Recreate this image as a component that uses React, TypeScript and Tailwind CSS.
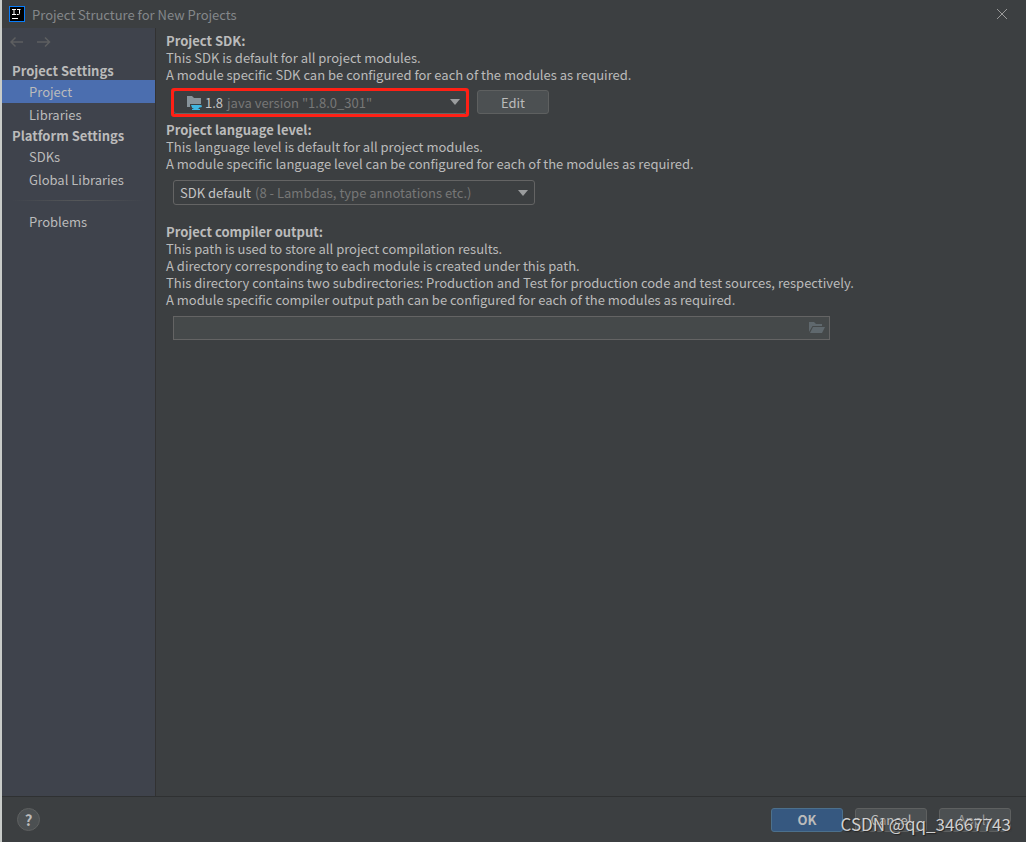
import { useState, type ReactNode } from "react";

const PLATFORM_ITEMS = ["SDKs", "Global Libraries"];
const PROJECT_ITEMS = ["Project", "Libraries"];

function IdeaLogo() {
  return (
    <svg width="16" height="16" viewBox="0 0 16 16" aria-hidden="true">
      <rect width="16" height="16" fill="#087cfa" />
      <rect x="1" y="1" width="14" height="14" fill="#000" />
      <path d="M3 3.5h4M5 3.5v5M3 8.500h4M8 3.500h3.500M10.500 3.500v4q0 1-1 1H7.800" stroke="#fff" fill="none" />
      <rect x="3" y="12" width="6" height="1" fill="#fff" />
    </svg>
  );
}

function ArrowIcon({ back = false }: { back?: boolean }) {
  return (
    <svg width="14" height="12" viewBox="0 0 14 12" fill="none" stroke="#5e5f60" strokeWidth="1.5" aria-hidden="true">
      {back ? <path d="M13 6H1M5.500 1.500L1 6L5.500 10.500" /> : <path d="M0 6h12.500M8 1.500L12.500 6L8 10.500" />}
    </svg>
  );
}

function SdkIcon() {
  return (
    <svg width="16" height="16" viewBox="0 0 16 16" aria-hidden="true">
      <path d="M1 2h5l2 2h7v6H4v3H1z" fill="#87939a" />
      <path d="M5 11h9q2 0 2 1.200T13.300 13.500Q12.500 15 11.500 15H8Q5.500 14 5 11z" fill="#40b6e0" />
      <path d="M6 15.500h8" stroke="#40b6e0" />
    </svg>
  );
}

function FolderIcon() {
  return (
    <svg width="16" height="12" viewBox="0 0 16 12" fill="#5f686d" aria-hidden="true">
      <path d="M0 0h5l2 2h6v2H3.500L0 10z" />
      <path d="M4 5h12l-3 6H1z" />
    </svg>
  );
}

function NavItem({ label, active, onClick }: { label: string; active: boolean; onClick: () => void }) {
  return (
    <button
      type="button"
      onClick={onClick}
      className={`block h-[23px] w-full pl-[27px] text-left ${active ? "bg-[#4b6eaf]" : ""}`}
    >
      {label}
    </button>
  );
}

type ComboProps = {
  label: string;
  value: string;
  hint: string;
  icon?: ReactNode;
  className: string;
};

function Combo({ label, value, hint, icon, className }: ComboProps) {
  return (
    <div className={`grid rounded-[3px] border border-[#646464] ${className}`}>
      <div className="col-start-1 row-start-1 flex items-center" aria-hidden="true">
        {icon}
        <span className="text-[#c4c4c4]">{value}</span>
        <span className="ml-1 text-[#777777]">{hint}</span>
        <svg className="mr-1.5 ml-auto" width="10" height="6" viewBox="0 0 10 6" fill="#9b9d9e">
          <path d="M0 0h10L5 6z" />
        </svg>
      </div>
      <select aria-label={label} className="col-start-1 row-start-1 opacity-0">
        <option>{`${value} ${hint}`}</option>
      </select>
    </div>
  );
}

export default function App() {
  const [page, setPage] = useState("Project");

  return (
    <div className="relative flex min-h-screen flex-col border-l-2 border-[#c9ccc9] bg-[#3c3f41] font-['Noto_Sans_CJK_SC','Open_Sans',sans-serif] text-[13px] leading-[17px] text-[#bbbbbb]">
      <header className="flex h-7 items-center pl-[7px] text-[#84878a]">
        <IdeaLogo />
        <h1 className="ml-[7px]">Project Structure for New Projects</h1>
        <button type="button" aria-label="Close" className="mr-[19px] ml-auto">
          <svg width="10" height="10" viewBox="0 0 10 10" stroke="#999999" aria-hidden="true">
            <path d="M0 0l10 10M10 0L0 10" />
          </svg>
        </button>
      </header>

      <div className="flex grow">
        <nav className="w-[154px] shrink-0 border-r border-[#323232] bg-[#3f434c]">
          <div className="flex gap-[13px] pt-2 pl-2">
            <button type="button" aria-label="Back">
              <ArrowIcon back />
            </button>
            <button type="button" aria-label="Forward">
              <ArrowIcon />
            </button>
          </div>
          <h2 className="mt-3.5 mb-px pl-2.5 font-bold">Project Settings</h2>
          {PROJECT_ITEMS.map((item) => (
            <NavItem key={item} label={item} active={page === item} onClick={() => setPage(item)} />
          ))}
          <h2 className="my-px pl-2.5 font-bold">Platform Settings</h2>
          {PLATFORM_ITEMS.map((item) => (
            <NavItem key={item} label={item} active={page === item} onClick={() => setPage(item)} />
          ))}
          <div className="mx-2.5 my-[9px] h-px bg-linear-to-r from-transparent via-[#555759] to-transparent" />
          <NavItem label="Problems" active={page === "Problems"} onClick={() => setPage("Problems")} />
        </nav>

        <main className="min-w-0 grow pt-1 pl-2.5">
          <h3 className="font-bold">Project SDK:</h3>
          <p>This SDK is default for all project modules.</p>
          <p>A module specific SDK can be configured for each of the modules as required.</p>
          <div className="my-[7px] ml-[7px] flex gap-2.5">
            <div className="relative">
              <Combo
                label="Project SDK"
                value="1.8"
                hint={'java version "1.8.0_301"'}
                icon={<span className="mr-[3px] ml-3"><SdkIcon /></span>}
                className="h-6 w-[294px]"
              />
              <div className="pointer-events-none absolute -inset-x-0.5 -top-0.5 -bottom-[3px] rounded-[3px] border-3 border-[#ff2015]" />
            </div>
            <button type="button" className="h-6 w-[72px] rounded-[3px] border border-[#5e6060] bg-[#4c5052]">
              Edit
            </button>
          </div>

          <h3 className="font-bold">Project language level:</h3>
          <p>This language level is default for all project modules.</p>
          <p>A module specific language level can be configured for each of the modules as required.</p>
          <Combo
            label="Project language level"
            value="SDK default"
            hint="(8 - Lambdas, type annotations etc.)"
            className="mt-2 mb-[18px] ml-[7px] h-[25px] w-[362px] pl-1.5"
          />

          <h3 className="font-bold">Project compiler output:</h3>
          <p>This path is used to store all project compilation results.</p>
          <p>A directory corresponding to each module is created under this path.</p>
          <p>This directory contains two subdirectories: Production and Test for production code and test sources, respectively.</p>
          <p>A module specific compiler output path can be configured for each of the modules as required.</p>
          <div className="mt-2 ml-[7px] flex h-6 w-[657px] items-center border border-[#646464] bg-[#45494a] pr-1">
            <input aria-label="Project compiler output" className="min-w-0 grow px-1.5 outline-none" />
            <button type="button" aria-label="Browse">
              <FolderIcon />
            </button>
          </div>
        </main>
      </div>

      <footer className="flex h-[46px] items-center gap-3 border-t border-[#2f3132] px-[15px]">
        <button
          type="button"
          aria-label="Help"
          className="mr-auto size-[23px] rounded-full border border-[#5e6060] bg-[#4c5052] text-[15px] font-bold"
        >
          ?
        </button>
        <button type="button" className="h-6 w-[72px] rounded-[3px] border border-[#4c708c] bg-[#365880] font-bold">
          OK
        </button>
        <button type="button" className="h-6 w-[72px] rounded-[3px] border border-[#5e6060] bg-[#4c5052]">
          Cancel
        </button>
        <button type="button" className="h-6 w-[72px] rounded-[3px] border border-[#5e6060] bg-[#4c5052] text-[#9a9c9d]">
          Apply
        </button>
      </footer>

      <span className="pointer-events-none absolute right-[15px] bottom-2 font-['Noto_Sans_CJK_SC',sans-serif] text-[17px] leading-5 text-[#d0d0d0] text-shadow-[1px_1px_1px_#222222]">
        CSDN @qq_34667743
      </span>
    </div>
  );
}
